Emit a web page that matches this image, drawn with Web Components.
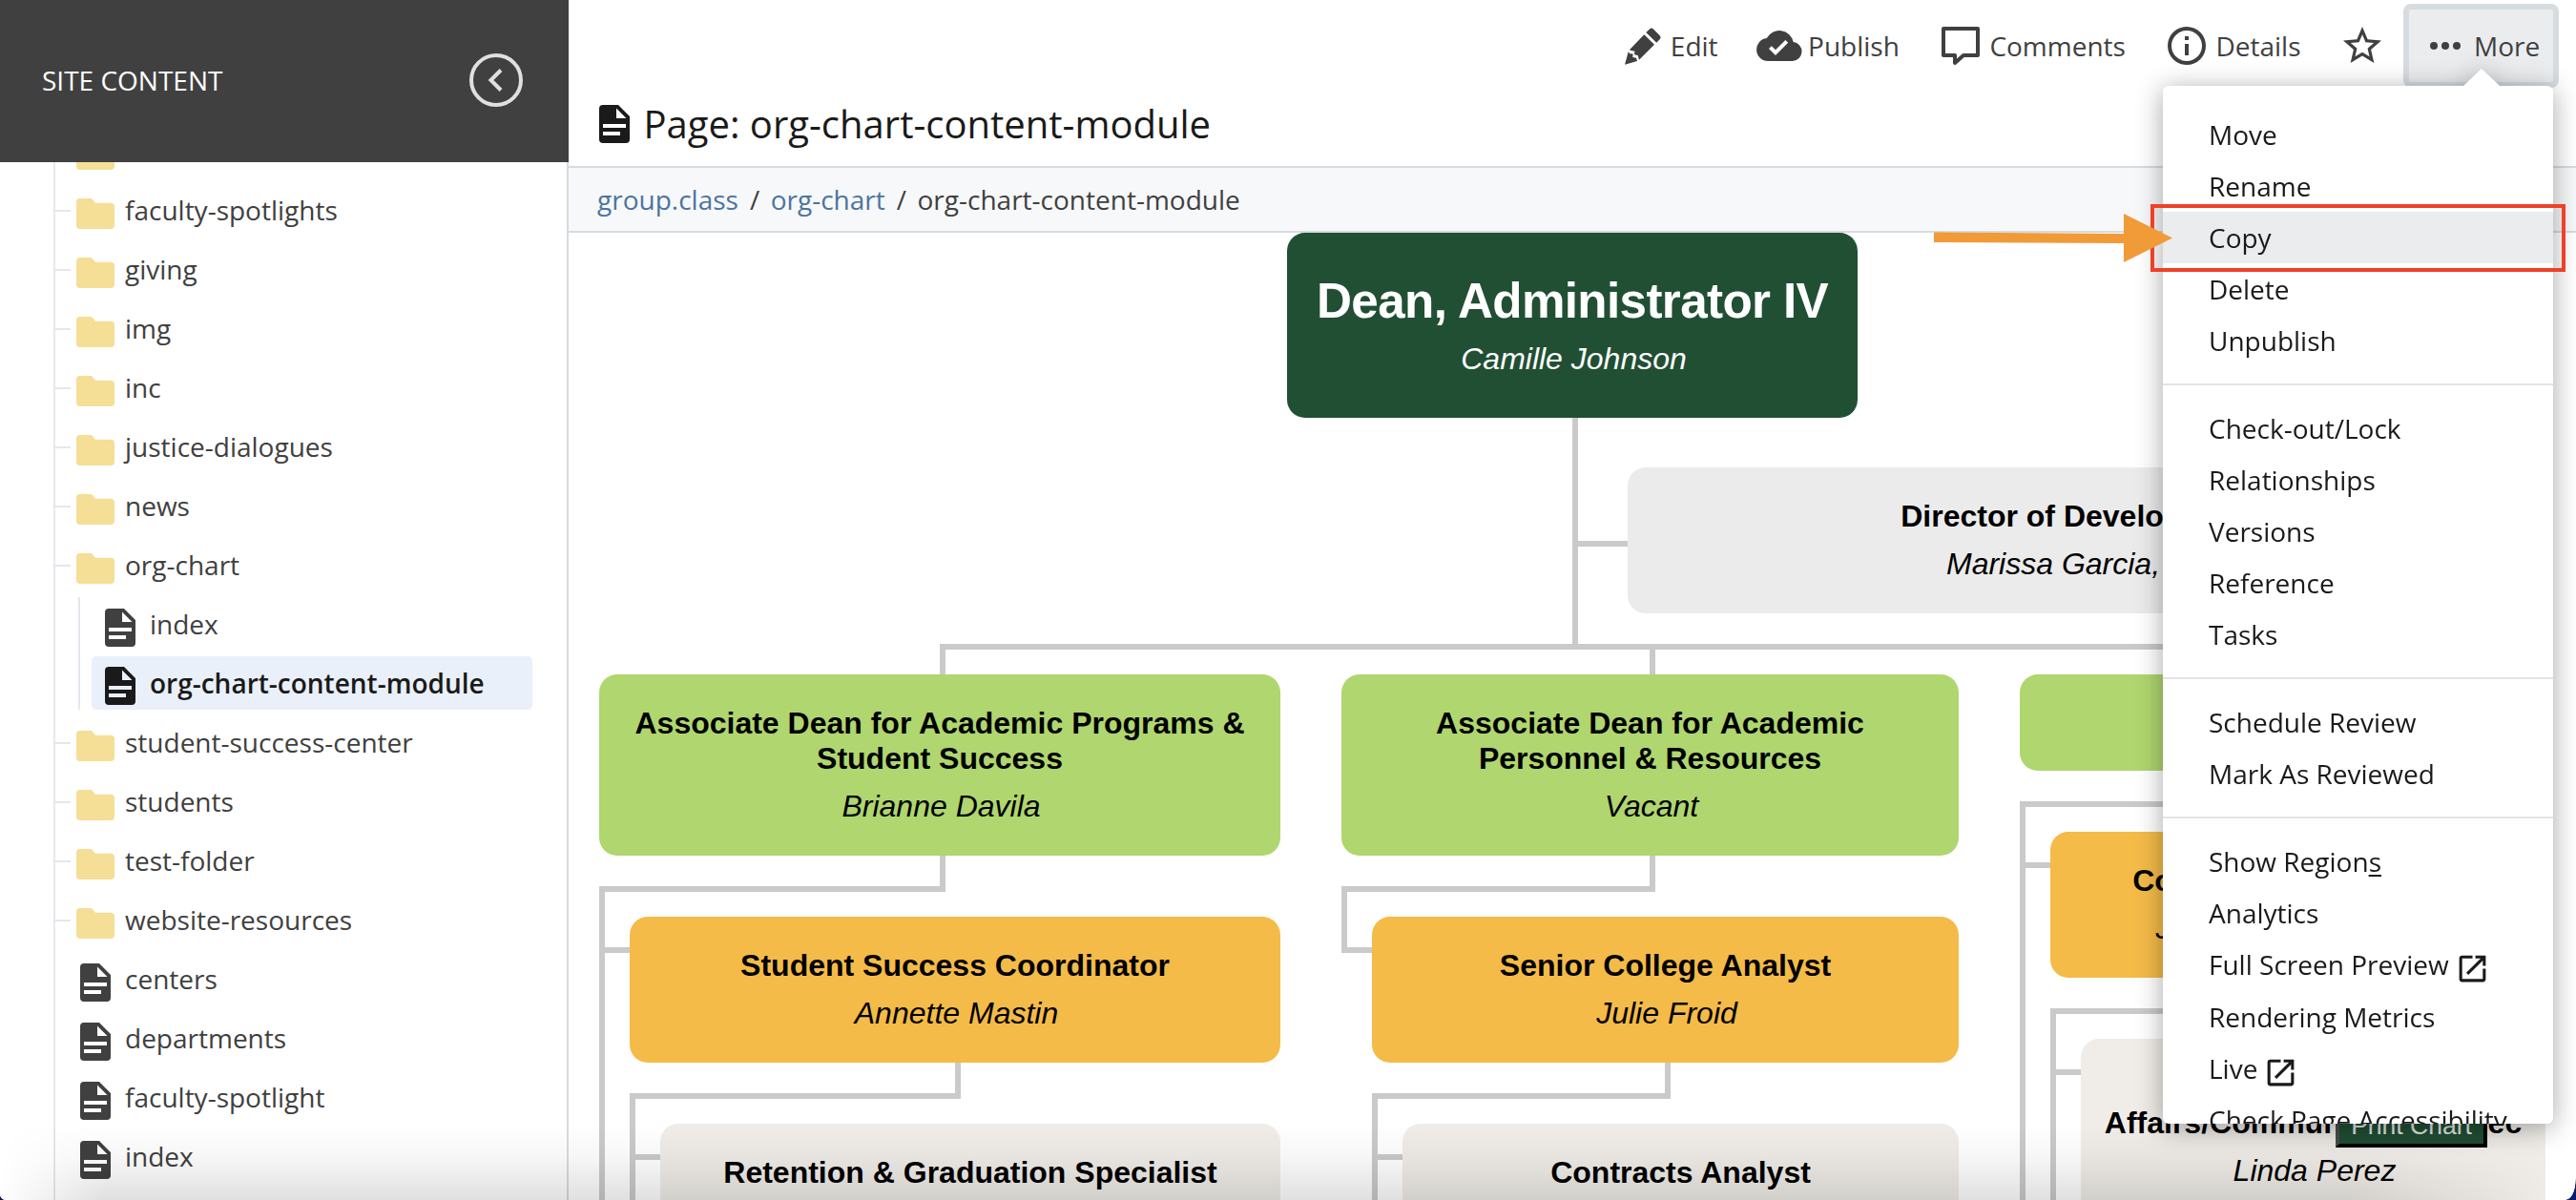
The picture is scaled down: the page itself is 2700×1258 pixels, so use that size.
<!DOCTYPE html>
<html lang="en">
<head>
<meta charset="utf-8">
<title>Page: org-chart-content-module</title>
<style>
  html, body {
    margin: 0;
    height: 100%;
    overflow: hidden;
    background: #fff;
    font-family: "Open Sans", sans-serif;
    font-size: 28px;
    color: #404040;
  }
</style>
</head>
<body>
<cms-app>
  <site-tree slot="sidebar" heading="SITE CONTENT">
    <tree-item icon="folder" branch></tree-item>
    <tree-item icon="folder" branch>faculty-spotlights</tree-item>
    <tree-item icon="folder" branch>giving</tree-item>
    <tree-item icon="folder" branch>img</tree-item>
    <tree-item icon="folder" branch>inc</tree-item>
    <tree-item icon="folder" branch>justice-dialogues</tree-item>
    <tree-item icon="folder" branch>news</tree-item>
    <tree-item icon="folder" branch>org-chart
      <tree-item slot="children" icon="file">index</tree-item>
      <tree-item slot="children" icon="file" selected>org-chart-content-module</tree-item>
    </tree-item>
    <tree-item icon="folder" branch>student-success-center</tree-item>
    <tree-item icon="folder" branch>students</tree-item>
    <tree-item icon="folder" branch>test-folder</tree-item>
    <tree-item icon="folder" branch>website-resources</tree-item>
    <tree-item icon="file">centers</tree-item>
    <tree-item icon="file">departments</tree-item>
    <tree-item icon="file">faculty-spotlight</tree-item>
    <tree-item icon="file">index</tree-item>
  </site-tree>

  <page-toolbar slot="toolbar">
    <tool-button icon="edit">Edit</tool-button>
    <tool-button icon="cloud">Publish</tool-button>
    <tool-button icon="comment">Comments</tool-button>
    <tool-button icon="info">Details</tool-button>
    <tool-button icon="star"></tool-button>
    <tool-button icon="more" active>More</tool-button>
  </page-toolbar>

  <page-title slot="title">Page: org-chart-content-module</page-title>

  <bread-crumb slot="crumbs">
    <a>group.class</a>
    <a>org-chart</a>
    <span>org-chart-content-module</span>
  </bread-crumb>

  <org-chart slot="content">
    <org-node slot="head" tone="head" role-title="Dean, Administrator IV" person="Camille Johnson"></org-node>
    <org-node slot="staff" tone="staff" role-title="Director of Development" person="Marissa Garcia," style="--name-shift: -26px"></org-node>

    <org-node slot="column" tone="dean" style="width: 714px" role-title="Associate Dean for Academic Programs &amp; Student Success" person="Brianne Davila">
      <org-node tone="lead" role-title="Student Success Coordinator" person="Annette Mastin">
        <org-node tone="leaf" role-title="Retention &amp; Graduation Specialist"></org-node>
      </org-node>
    </org-node>
    <org-node slot="column" tone="dean" style="width: 647px; --trunk: 70px; --mid: 323px" role-title="Associate Dean for Academic Personnel &amp; Resources" person="Vacant">
      <org-node tone="lead" style="--trunk: 600px; --mid: 307px" role-title="Senior College Analyst" person="Julie Froid">
        <org-node tone="leaf" role-title="Contracts Analyst"></org-node>
      </org-node>
    </org-node>
    <org-node slot="column" tone="dean" style="width: 551px" role-title="&nbsp;">
      <org-node tone="lead" role-title="Co" person="J" style="--title-shift: -152px; --name-shift: -141px">
        <org-node tone="leaf" role-title="Affairs/Communication Spec" person="Linda Perez" style="--pad-top: 69px"></org-node>
      </org-node>
    </org-node>
    <button slot="print">Print Chart</button>
  </org-chart>

  <more-menu slot="menu">
    <menu-group>
      <menu-item>Move</menu-item>
      <menu-item>Rename</menu-item>
      <menu-item active>Copy</menu-item>
      <menu-item>Delete</menu-item>
      <menu-item>Unpublish</menu-item>
    </menu-group>
    <menu-group>
      <menu-item>Check-out/Lock</menu-item>
      <menu-item>Relationships</menu-item>
      <menu-item>Versions</menu-item>
      <menu-item>Reference</menu-item>
      <menu-item>Tasks</menu-item>
    </menu-group>
    <menu-group>
      <menu-item>Schedule Review</menu-item>
      <menu-item>Mark As Reviewed</menu-item>
    </menu-group>
    <menu-group>
      <menu-item>Show Region<u>s</u></menu-item>
      <menu-item>Analytics</menu-item>
      <menu-item external>Full Screen Preview</menu-item>
      <menu-item>Rendering Metrics</menu-item>
      <menu-item external>Live</menu-item>
      <menu-item>Check Page Accessibility</menu-item>
    </menu-group>
  </more-menu>

  <callout-marker slot="overlay"></callout-marker>
</cms-app>

<script>
// Icon paths on a 48px grid
const ICONS = {
  folder: '<path d="M20 8H8a4 4 0 0 0-4 4v24a4 4 0 0 0 4 4h32a4 4 0 0 0 4-4V16.500a4 4 0 0 0-4-3.700H24z"/>',
  file: '<path fill-rule="evenodd" d="M28 4H12a4 4 0 0 0-4 4v32a4 4 0 0 0 4 4h24a4 4 0 0 0 4-4V16zM12 24h24v4H12zM12 32h18v4H12zM26 7.500V18h10.500z"/>',
  edit: '<path d="M32.300 6.300a2.600 2.600 0 0 1 3.400 0l7.200 7.300a2.600 2.600 0 0 1 0 3.400l-3.700 3.700-10.900-10.600zM26.300 12.300l10.700 10.400-16 16-1.300-4.700-3.700-.7.400-3.600-3.600-.6-1.900-.8zM9.800 30l1.300 2.200 3.500.4-.3 3.300 3.700.8 1 3.200L6 43.700z"/>',
  cloud: '<path fill-rule="evenodd" d="M38.700 20.080A15 15 0 0 0 10.700 16.080 12 12 0 0 0 12 40h26a10 10 0 0 0 .7-19.920zM20 34l-7-7 2.830-2.830L20 28.340 30.350 18l2.830 2.830z"/>',
  comment: '<path fill="none" stroke="currentColor" stroke-width="4" stroke-linejoin="round" d="M6 6H42V34H27L18 42V34H6Z"/>',
  info: '<path d="M22 34h4V22h-4zM24 4a20 20 0 1 0 0 40 20 20 0 0 0 0-40zm0 36a16 16 0 1 1 0-32 16 16 0 0 1 0 32zM22 18h4v-4h-4z"/>',
  star: '<path d="M44 18.480l-14.380-1.240L24 4l-5.620 13.260L4 18.480l10.920 9.460L11.640 42 24 34.540 36.360 42l-3.260-14.060zM24 30.800l-7.520 4.540 2-8.560-6.640-5.760 8.760-.76L24 12.200l3.420 8.080 8.760.76-6.640 5.760 2 8.560z"/>',
  more: '<path d="M12 20a4 4 0 1 0 0 8 4 4 0 0 0 0-8zm24 0a4 4 0 1 0 0 8 4 4 0 0 0 0-8zm-12 0a4 4 0 1 0 0 8 4 4 0 0 0 0-8z"/>',
  external: '<path d="M38 38H10V10h14V6H10a4 4 0 0 0-4 4v28a4 4 0 0 0 4 4h28a4 4 0 0 0 4-4V24h-4zM28 6v4h7.180L15.520 29.660l2.820 2.820L38 12.820V20h4V6z"/>'
};

class BaseElement extends HTMLElement {
  constructor() {
    super();
    this.attachShadow({ mode: 'open' });
  }

  connectedCallback() {
    this.shadowRoot.innerHTML = this.render();
  }
}

class AppIcon extends BaseElement {
  render() {
    return `
      <style>
        :host { display: block; flex: none; width: 48px; height: 48px; }
        svg { display: block; width: 100%; height: 100%; fill: currentColor; }
      </style>
      <svg viewBox="0 0 48 48">${ICONS[this.getAttribute('name')]}</svg>
    `;
  }
}

// Page frame: sidebar, main column and whatever floats above them
class CmsApp extends BaseElement {
  render() {
    return `
      <style>
        :host {
          display: flex;
          position: relative;
          width: 2700px;
          height: 1258px;
          overflow: hidden;
        }
        main {
          flex: 1;
          min-width: 0;
          display: flex;
          flex-direction: column;
        }
        .shade {
          position: absolute;
          inset: auto 0 0 0;
          height: 80px;
          background: linear-gradient(to bottom, rgba(0,0,0,0), rgba(0,0,0,.035) 45%, rgba(0,0,0,.12));
          -webkit-mask-image: linear-gradient(to right, transparent, #000 110px, #000 calc(100% - 240px), transparent calc(100% - 20px));
          mask-image: linear-gradient(to right, transparent, #000 110px, #000 calc(100% - 240px), transparent calc(100% - 20px));
        }
        .corner { position: absolute; bottom: 0; }
        .left { left: 0; width: 5px; height: 5px; background: radial-gradient(circle at 100% 0, transparent 4.500px, #0a1560 5px); }
        .right { right: 0; width: 10px; height: 22px; background: radial-gradient(ellipse 10px 22px at 0 0, transparent 94%, #0a1a70 100%); }
      </style>
      <slot name="sidebar"></slot>
      <main>
        <slot name="toolbar"></slot>
        <slot name="title"></slot>
        <slot name="crumbs"></slot>
        <slot name="content"></slot>
      </main>
      <slot name="menu"></slot>
      <slot name="overlay"></slot>
      <div class="shade"></div>
      <div class="corner left"></div>
      <div class="corner right"></div>
    `;
  }
}

class SiteTree extends BaseElement {
  render() {
    return `
      <style>
        :host {
          flex: none;
          display: flex;
          flex-direction: column;
          width: 596px;
          height: 100%;
          overflow: hidden;
        }
        header {
          flex: none;
          display: flex;
          align-items: center;
          justify-content: space-between;
          box-sizing: border-box;
          height: 170px;
          padding: 0 48px 2px 44px;
          background: #404040;
          color: #fff;
        }
        svg { display: block; width: 56px; height: 56px; }
        .rows {
          flex: 1;
          min-height: 0;
          overflow: hidden;
          box-sizing: border-box;
          border-right: 2px solid #d7dbdf;
          padding-left: 56px;
        }
        .tree {
          border-left: 2px solid #e4e7ec;
          margin-top: -43px;
          min-height: calc(100% + 43px);
        }
      </style>
      <header>
        <span>${this.getAttribute('heading')}</span>
        <svg viewBox="0 0 56 56" fill="none" stroke="#e0e0e0" stroke-width="4">
          <circle cx="28" cy="28" r="26"/>
          <path d="M33 17.500L22.500 28 33 38.500"/>
        </svg>
      </header>
      <div class="rows"><div class="tree"><slot></slot></div></div>
    `;
  }
}

class TreeItem extends BaseElement {
  render() {
    const icon = this.getAttribute('icon');
    return `
      <style>
        :host { display: flow-root; line-height: 62px; white-space: nowrap; }
        .row {
          display: flex;
          gap: 7px;
          height: 62px;
          padding-left: 18px;
          position: relative;
        }
        app-icon { margin-top: 11px; }
        app-icon[name="folder"] { color: #f5de96; }
        :host([branch]) .row::before {
          content: "";
          position: absolute;
          left: 0;
          top: 31px;
          width: 16px;
          height: 2px;
          background: #e4e7ec;
        }
        :host([selected]) .row {
          height: 56px;
          margin: 3px 36px 3px 12px;
          padding-left: 6px;
          line-height: 56px;
          border-radius: 5px;
          background: #e9f0f9;
          color: #1a1a1a;
          font-weight: 600;
        }
        :host([selected]) app-icon { margin-top: 7px; }
        .children { position: relative; padding-left: 26px; }
        .children::before {
          content: "";
          position: absolute;
          left: 24px;
          top: 3px;
          bottom: 3px;
          width: 2px;
          background: #e4e7ec;
        }
      </style>
      <div class="row"><app-icon name="${icon}"></app-icon><span><slot></slot></span></div>
      ${this.querySelector('[slot="children"]') ? '<div class="children"><slot name="children"></slot></div>' : ''}
    `;
  }
}

class PageToolbar extends BaseElement {
  render() {
    return `
      <style>
        :host {
          flex: none;
          display: flex;
          align-items: center;
          justify-content: flex-end;
          gap: 40.500px;
          height: 96px;
          padding-right: 18px;
        }
        ::slotted([active]) { margin-left: -21.500px; }
      </style>
      <slot></slot>
    `;
  }
}

class ToolButton extends BaseElement {
  render() {
    return `
      <style>
        :host { display: flex; align-items: center; gap: 6px; }
        :host([active]) {
          box-sizing: border-box;
          width: 163px;
          height: 88px;
          padding-left: 14px;
          border: 6px solid #d7dce0;
          border-radius: 8px;
          background: #ebecee;
        }
      </style>
      <app-icon name="${this.getAttribute('icon')}"></app-icon>
      ${this.textContent ? '<span><slot></slot></span>' : ''}
    `;
  }
}

class PageTitle extends BaseElement {
  render() {
    return `
      <style>
        :host {
          flex: none;
          display: flex;
          align-items: center;
          gap: 6.500px;
          height: 68px;
          padding: 0 0 10px 24px;
          font-size: 40px;
          line-height: 60px;
          color: #1a1a1a;
        }
      </style>
      <app-icon name="file"></app-icon>
      <span><slot></slot></span>
    `;
  }
}

class BreadCrumb extends BaseElement {
  render() {
    return `
      <style>
        :host {
          flex: none;
          display: flex;
          align-items: center;
          height: 66px;
          padding-left: 30px;
          border-top: 2px solid #d7dce0;
          border-bottom: 2px solid #d7dce0;
          background: #f7f8fa;
        }
        ::slotted(a) { color: #4c74a0; }
        ::slotted(:not(:last-child))::after {
          content: "/";
          margin: 0 11.500px 0 12px;
          color: #404040;
        }
      </style>
      <slot></slot>
    `;
  }
}

class OrgChart extends BaseElement {
  render() {
    return `
      <style>
        :host {
          flex: 1;
          min-height: 0;
          display: block;
          position: relative;
          overflow: hidden;
          padding-left: 32px;
          font-family: "Liberation Sans", Arial, sans-serif;
          font-size: 32px;
          line-height: 37px;
          color: #000;
          --line: #cacaca;
        }
        .head { width: 598px; margin-left: 721px; }
        .staff {
          margin-left: 1020px;
          padding: 52px 0 32px 52px;
          border-left: 6px solid var(--line);
        }
        ::slotted([slot="staff"]) { width: 944px; }
        .bar { margin-left: 357px; width: 1413px; height: 6px; background: var(--line); }
        .columns { display: flex; align-items: flex-start; gap: 64px; padding-top: 26px; }
        ::slotted([slot="column"]) { flex: none; }
        ::slotted(button) {
          position: absolute;
          left: 1852px;
          top: 911px;
          width: 159px;
          height: 48px;
          padding: 2px 0 0;
          box-sizing: border-box;
          border: 4px solid;
          border-color: #4c4c4c #000 #000 #4c4c4c;
          background: #214f34;
          color: #e6e6e6;
          font: 26.500px/37px "Liberation Sans", Arial, sans-serif;
        }
      </style>
      <div class="head"><slot name="head"></slot></div>
      <div class="staff"><slot name="staff"></slot></div>
      <div class="bar"></div>
      <div class="columns"><slot name="column"></slot></div>
      <slot name="print"></slot>
    `;
  }
}

// One box of the chart; nested org-nodes hang below it
class OrgNode extends BaseElement {
  render() {
    const person = this.getAttribute('person');
    return `
      <style>
        :host { display: block; position: relative; }
        .card {
          position: relative;
          padding: var(--pad-top, 32px) 20px 32px;
          border-radius: 19px;
          background: var(--tone);
          text-align: center;
        }
        :host([tone="head"]) { --tone: #214f34; color: #fff; }
        :host([tone="staff"]) { --tone: #ebebeb; }
        :host([tone="dean"]) { --tone: #afd66f; }
        :host([tone="lead"]) { --tone: #f4bb48; }
        :host([tone="leaf"]) { --tone: #f0ede8; }
        :host([tone="head"]) .card { padding: 42px 20px; }
        :host([tone="head"]) .title {
          font-size: 51.200px;
          line-height: 58px;
          letter-spacing: -.63px;
          white-space: nowrap;
        }
        .title {
          position: relative;
          top: 1px;
          left: var(--title-shift, 0);
          font-weight: bold;
        }
        .name {
          position: relative;
          top: 1px;
          left: var(--name-shift, 1.500px);
          margin: 13px 0 2px;
          font-style: italic;
        }
        .sub { position: relative; padding: 64px 0 0 32px; }
        /* stub from the card down and across to the trunk */
        .sub::before {
          content: "";
          position: absolute;
          left: 0;
          top: 0;
          box-sizing: border-box;
          width: calc(var(--mid, 50%) + 6px);
          height: 38px;
          border: solid var(--line);
          border-width: 0 6px 6px 0;
        }
        .sub::after {
          content: "";
          position: absolute;
          left: 0;
          top: 32px;
          width: 6px;
          height: var(--trunk, 600px);
          background: var(--line);
        }
        /* connector into this card */
        :host(:not([tone="head"])) .card::before {
          content: "";
          position: absolute;
          left: -26px;
          top: 32px;
          width: 26px;
          height: 6px;
          background: var(--line);
        }
        :host([tone="staff"]) .card::before { left: -52px; top: 77px; width: 52px; }
        :host([tone="dean"]) .card::before { left: var(--mid, 50%); top: -26px; width: 6px; height: 26px; }
        ::slotted(org-node) { --title-shift: initial; --name-shift: initial; }
      </style>
      <div class="card">
        <div class="title"></div>
        ${person ? '<div class="name"></div>' : ''}
      </div>
      ${this.children.length ? '<div class="sub"><slot></slot></div>' : ''}
    `;
  }

  connectedCallback() {
    super.connectedCallback();
    this.shadowRoot.querySelector('.title').textContent = this.getAttribute('role-title');
    const name = this.shadowRoot.querySelector('.name');
    if (name) name.textContent = this.getAttribute('person');
  }
}

class MoreMenu extends BaseElement {
  render() {
    return `
      <style>
        :host {
          display: block;
          position: absolute;
          left: 2267px;
          top: 90px;
          width: 409px;
          height: 1088px;
          border-radius: 6px;
          background: #fff;
          color: #1a1a1a;
          filter: drop-shadow(0 4px 14px rgba(0,0,0,.35));
        }
        :host::before {
          content: "";
          position: absolute;
          left: 315px;
          top: -18px;
          border: solid transparent;
          border-width: 0 19px 18px;
          border-bottom-color: #fff;
        }
        .list { height: 100%; box-sizing: border-box; padding-top: 6px; overflow: hidden; }
      </style>
      <div class="list"><slot></slot></div>
    `;
  }
}

class MenuGroup extends BaseElement {
  render() {
    return `
      <style>
        :host { display: block; padding: 18px 0; }
        :host(:not(:last-child)) { border-bottom: 2px solid #e4e4e4; }
      </style>
      <slot></slot>
    `;
  }
}

class MenuItem extends BaseElement {
  render() {
    return `
      <style>
        :host {
          display: flex;
          gap: 6px;
          height: 54px;
          line-height: 54px;
          padding-left: 48px;
          white-space: nowrap;
        }
        :host([active]) { background: #ebecee; }
        :host([external]) { height: 54.500px; }
        app-icon { width: 37px; height: 37px; margin-top: 13px; }
        ::slotted(u) { text-underline-offset: 3px; }
      </style>
      <span><slot></slot></span>
      ${this.hasAttribute('external') ? '<app-icon name="external"></app-icon>' : ''}
    `;
  }
}

// Arrow and frame that point at the Copy entry
class CalloutMarker extends BaseElement {
  render() {
    return `
      <style>
        :host { display: block; position: absolute; left: 2020px; top: 210px; }
        svg { display: block; }
      </style>
      <svg width="680" height="80" viewBox="2020 210 680 80">
        <rect x="2256" y="216" width="431" height="67" fill="none" stroke="#ee4128" stroke-width="4"/>
        <path fill="#f19a38" d="M2027 243.500L2226 245V224L2277 249.500 2226 275V255L2027 254z"/>
      </svg>
    `;
  }
}

customElements.define('app-icon', AppIcon);
customElements.define('cms-app', CmsApp);
customElements.define('site-tree', SiteTree);
customElements.define('tree-item', TreeItem);
customElements.define('page-toolbar', PageToolbar);
customElements.define('tool-button', ToolButton);
customElements.define('page-title', PageTitle);
customElements.define('bread-crumb', BreadCrumb);
customElements.define('org-chart', OrgChart);
customElements.define('org-node', OrgNode);
customElements.define('more-menu', MoreMenu);
customElements.define('menu-group', MenuGroup);
customElements.define('menu-item', MenuItem);
customElements.define('callout-marker', CalloutMarker);
</script>
</body>
</html>
